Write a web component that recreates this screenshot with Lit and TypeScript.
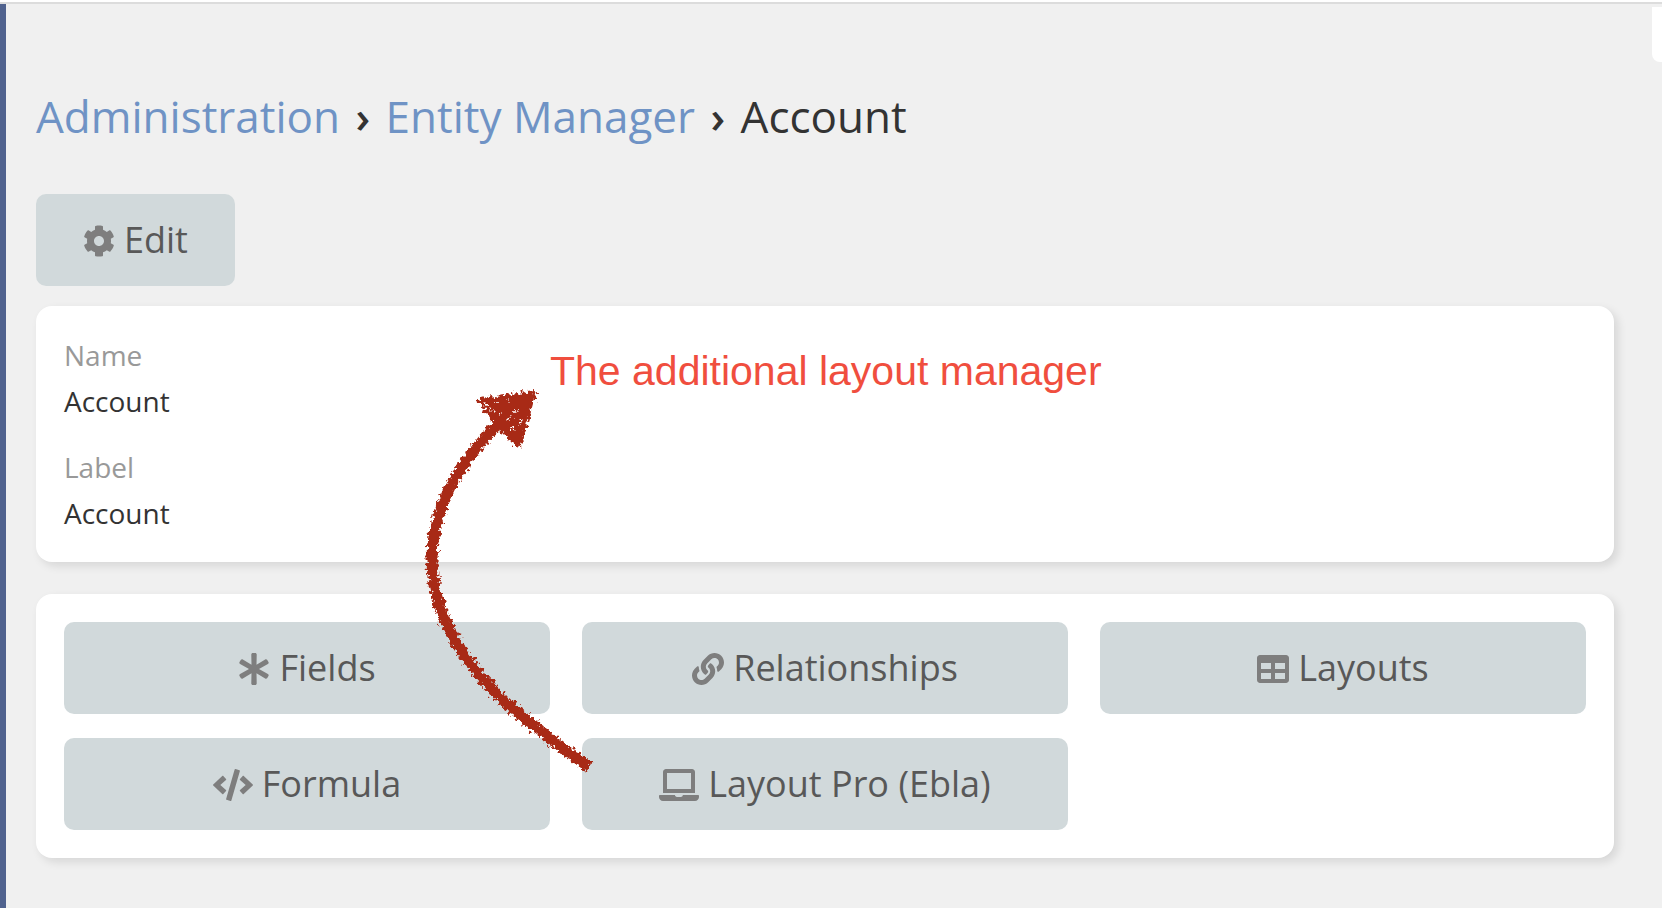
import { LitElement, html, css, svg } from "lit";
import { customElement, property } from "lit/decorators.js";

interface Glyph {
  width: number;
  path: string;
}

const GLYPHS: Record<string, Glyph> = {
  cog: {
    width: 512,
    path: "M487.4 315.7l-42.6-24.6c4.3-23.2 4.3-47 0-70.2l42.6-24.6c4.9-2.8 7.1-8.6 5.5-14-11.1-35.6-30-67.8-54.7-94.6-3.8-4.1-10-5.1-14.8-2.3L380.8 110c-17.9-15.4-38.5-27.3-60.8-35.1V25.8c0-5.6-3.9-10.5-9.4-11.7-36.7-8.2-74.3-7.8-109.2 0-5.5 1.2-9.4 6.1-9.4 11.7V75c-22.2 7.9-42.8 19.8-60.8 35.1L88.7 85.5c-4.9-2.8-11-1.9-14.8 2.3-24.7 26.7-43.6 58.9-54.7 94.6-1.7 5.4.6 11.2 5.5 14L67.3 221c-4.3 23.2-4.3 47 0 70.2l-42.6 24.6c-4.9 2.8-7.1 8.6-5.5 14 11.1 35.6 30 67.8 54.7 94.6 3.8 4.1 10 5.1 14.8 2.3l42.6-24.6c17.9 15.4 38.5 27.3 60.8 35.1v49.2c0 5.6 3.9 10.5 9.4 11.7 36.7 8.2 74.3 7.8 109.2 0 5.5-1.2 9.4-6.1 9.4-11.7v-49.2c22.2-7.9 42.8-19.8 60.8-35.1l42.6 24.6c4.9 2.8 11 1.9 14.8-2.3 24.7-26.7 43.6-58.9 54.7-94.6 1.5-5.5-.7-11.3-5.6-14.1zM256 336c-44.1 0-80-35.9-80-80s35.9-80 80-80 80 35.9 80 80-35.9 80-80 80z",
  },
  asterisk: {
    width: 512,
    path: "M478.21 334.093L336 256l142.21-78.093c11.795-6.477 15.961-21.384 9.232-33.037l-19.48-33.741c-6.728-11.653-21.72-15.499-33.227-8.523L296 186.718l3.475-162.204C299.763 11.061 288.937 0 275.48 0h-38.96c-13.456 0-24.283 11.061-23.994 24.514L216 186.718 77.265 102.607c-11.506-6.976-26.499-3.13-33.227 8.523l-19.48 33.741c-6.728 11.653-2.562 26.56 9.233 33.037L176 256 33.79 334.093c-11.795 6.477-15.961 21.384-9.232 33.037l19.48 33.741c6.728 11.653 21.721 15.499 33.227 8.523L216 325.282l-3.475 162.204C212.237 500.939 223.064 512 236.52 512h38.961c13.456 0 24.283-11.061 23.995-24.514L296 325.282l138.735 84.111c11.506 6.976 26.499 3.13 33.227-8.523l19.48-33.741c6.728-11.653 2.563-26.559-9.232-33.036z",
  },
  link: {
    width: 512,
    path: "M326.612 185.391c59.747 59.809 58.927 155.698.36 214.59-.11.12-.24.25-.36.37l-67.2 67.2c-59.27 59.27-155.699 59.262-214.96 0-59.27-59.26-59.27-155.7 0-214.96l37.106-37.106c9.84-9.84 26.786-3.3 27.294 10.606.648 17.722 3.826 35.527 9.69 52.721 1.986 5.822.567 12.262-3.783 16.612l-13.087 13.087c-28.026 28.026-28.905 73.66-1.155 101.96 28.024 28.579 74.086 28.749 102.325.51l67.2-67.19c28.191-28.191 28.073-73.757 0-101.83-3.701-3.694-7.429-6.564-10.341-8.569a16.037 16.037 0 0 1-6.947-12.606c-.396-10.567 3.348-21.456 11.698-29.806l21.054-21.055c5.521-5.521 14.182-6.199 20.584-1.731a152.482 152.482 0 0 1 20.522 17.197zM467.547 44.449c-59.261-59.262-155.69-59.27-214.96 0l-67.2 67.2c-.12.12-.25.25-.36.37-58.566 58.892-59.387 154.781.36 214.59a152.454 152.454 0 0 0 20.521 17.196c6.402 4.468 15.064 3.789 20.584-1.731l21.054-21.055c8.35-8.35 12.094-19.239 11.698-29.806a16.037 16.037 0 0 0-6.947-12.606c-2.912-2.005-6.64-4.875-10.341-8.569-28.073-28.073-28.191-73.639 0-101.83l67.2-67.19c28.239-28.239 74.3-28.069 102.325.51 27.75 28.3 26.872 73.934-1.155 101.96l-13.087 13.087c-4.35 4.35-5.769 10.79-3.783 16.612 5.864 17.194 9.042 34.999 9.69 52.721.509 13.906 17.454 20.446 27.294 10.606l37.106-37.106c59.271-59.259 59.271-155.699.001-214.959z",
  },
  table: {
    width: 512,
    path: "M464 32H48C21.49 32 0 53.49 0 80v352c0 26.51 21.49 48 48 48h416c26.51 0 48-21.49 48-48V80c0-26.51-21.49-48-48-48zM224 416H64v-96h160v96zm0-160H64v-96h160v96zm224 160H288v-96h160v96zm0-160H288v-96h160v96z",
  },
  code: {
    width: 640,
    path: "M278.9 511.5l-61-17.7c-6.4-1.8-10-8.5-8.2-14.9L346.2 8.7c1.8-6.4 8.5-10 14.9-8.2l61 17.7c6.4 1.8 10 8.5 8.2 14.9L293.8 503.3c-1.9 6.4-8.5 10.1-14.9 8.2zm-114-112.2l43.5-46.4c4.6-4.9 4.3-12.7-.8-17.2L117 256l90.6-79.7c5.1-4.5 5.5-12.3.8-17.2l-43.5-46.4c-4.5-4.8-12.1-5.1-17-.5L3.8 247.2c-5.1 4.7-5.1 12.8 0 17.5l144.1 135.1c4.9 4.6 12.5 4.4 17-.5zm327.2.6l144.1-135.1c5.1-4.7 5.1-12.8 0-17.5L492.1 112.1c-4.8-4.5-12.4-4.3-17 .5L431.6 159c-4.6 4.9-4.3 12.7.8 17.2L523 256l-90.6 79.7c-5.1 4.5-5.5 12.3-.8 17.2l43.5 46.4c4.5 4.9 12.1 5.1 17 .6z",
  },
  laptop: {
    width: 640,
    path: "M624 416H381.54c-.74 19.81-14.71 32-32.74 32H288c-18.69 0-33.02-17.47-32.77-32H16c-8.8 0-16 7.2-16 16v16c0 35.2 28.8 64 64 64h512c35.2 0 64-28.8 64-64v-16c0-8.8-7.2-16-16-16zM576 48c0-26.4-21.6-48-48-48H112C85.6 0 64 21.6 64 48v336h512V48zm-64 272H128V64h384v256z",
  },
};

@customElement("icon-button")
class IconButton extends LitElement {
  @property() icon = "cog";
  @property() label = "";

  static styles = css`
    :host {
      display: block;
    }
    .button {
      box-sizing: border-box;
      width: 100%;
      min-height: 92px;
      padding: 20px 47px;
      display: flex;
      align-items: center;
      justify-content: center;
      gap: 9px;
      border: 0;
      border-radius: 10px;
      background: #d1d9db;
      color: #585858;
      font: 400 36px/48px "Open Sans", "Noto Sans", sans-serif;
      white-space: nowrap;
      cursor: pointer;
    }
    .button:hover {
      background: #c5cfd1;
    }
    .icon {
      flex: none;
      height: 32px;
      margin-top: 2px;
      fill: #7e7e7e;
    }
  `;

  render() {
    const glyph = GLYPHS[this.icon];
    return html`<button class="button" type="button">
      <svg class="icon" viewBox="0 0 ${glyph.width} 512" aria-hidden="true">
        ${svg`<path d=${glyph.path}></path>`}
      </svg>
      <span>${this.label}</span>
    </button>`;
  }
}

@customElement("app-root")
class AppRoot extends LitElement {
  static styles = css`
    :host {
      display: flex;
      flex-direction: column;
      min-height: 100vh;
      background: #f0f0f0;
      color: #333;
      font-family: "Open Sans", "Noto Sans", sans-serif;
      overflow: hidden;
    }
    .topline {
      height: 2px;
      background: #fff;
      border-bottom: 2px solid #dcdcdc;
    }
    .body {
      position: relative;
      flex: 1;
      display: flex;
    }
    .rail {
      flex: none;
      width: 6px;
      background: #50628e;
    }
    .corner {
      position: absolute;
      top: 3px;
      right: 0;
      width: 10px;
      height: 55px;
      border-bottom-left-radius: 8px;
      background: #fff;
    }
    .content {
      flex: 1;
      min-width: 0;
      padding: 82px 48px 50px 30px;
    }
    .title {
      margin: 0 0 48px;
      font-size: 44px;
      line-height: 60px;
      font-weight: 400;
    }
    .title a {
      color: #6f93c5;
      text-decoration: none;
    }
    .sep {
      margin: 0 4px;
      font-weight: 600;
    }
    .actions {
      display: flex;
      margin-bottom: 20px;
    }
    .card {
      padding: 28px;
      border-radius: 16px;
      background: #fff;
      box-shadow: 4px 4px 10px rgba(0, 0, 0, 0.11);
    }
    .record {
      display: grid;
      gap: 24px;
      margin: 0 0 32px;
      font-size: 28px;
      line-height: 42px;
    }
    .field {
      display: grid;
      gap: 4px;
    }
    .field dt {
      color: #999;
    }
    .field dd {
      margin: 0;
    }
    .tools {
      display: grid;
      grid-template-columns: repeat(3, 1fr);
      gap: 24px 32px;
    }
    .arrow {
      position: absolute;
      left: 410px;
      top: 376px;
      width: 200px;
      height: 410px;
      pointer-events: none;
    }
    .note {
      position: absolute;
      left: 550px;
      top: 344px;
      margin: 0;
      color: #f04e3e;
      font: 400 41px/46px "Liberation Sans", Arial, sans-serif;
      white-space: nowrap;
    }
  `;

  private fields = [
    { name: "Name", value: "Account" },
    { name: "Label", value: "Account" },
  ];

  private tools = [
    { icon: "asterisk", label: "Fields" },
    { icon: "link", label: "Relationships" },
    { icon: "table", label: "Layouts" },
    { icon: "code", label: "Formula" },
    { icon: "laptop", label: "Layout Pro (Ebla)" },
  ];

  // Hand-drawn chalk arrow; the turbulence filter roughens its outline.
  private arrow() {
    return html`<svg class="arrow" viewBox="410 380 200 410" aria-hidden="true">
      <defs>
        <filter id="chalk" filterUnits="userSpaceOnUse" x="410" y="380" width="200" height="410">
          <feTurbulence type="fractalNoise" baseFrequency="0.28" numOctaves="3" seed="7" result="noise"></feTurbulence>
          <feDisplacementMap in="SourceGraphic" in2="noise" scale="10" xChannelSelector="R" yChannelSelector="G"></feDisplacementMap>
        </filter>
      </defs>
      <g filter="url(#chalk)">
        <path
          d="M589 767C563 748 529 724 501 698C466 664 432 618 432 559C432 505 463 457 502 421"
          fill="none"
          stroke="#a82b18"
          stroke-width="11"
        ></path>
        <path
          d="M480 400L534 393L519 446L503 430L494 421Z"
          fill="#a82b18"
          stroke="#a82b18"
          stroke-width="4"
          stroke-linejoin="round"
        ></path>
        <path
          d="M483 403l4 1M490 409l3 1M496 403l2 0M507 400l1 1M513 411l4 0M509 418l2-1M499 413l1 1M520 423l2-2M511 430l3-2"
          fill="none"
          stroke="#fff"
          stroke-width="1.5"
          stroke-linecap="round"
        ></path>
      </g>
    </svg>`;
  }

  render() {
    return html`
      <div class="topline"></div>
      <div class="body">
        <div class="rail"></div>
        <main class="content">
          <h1 class="title">
            <a href="#Admin">Administration</a> <span class="sep">›</span>
            <a href="#Admin/entityManager">Entity Manager</a> <span class="sep">›</span>
            Account
          </h1>
          <div class="actions">
            <icon-button icon="cog" label="Edit"></icon-button>
          </div>
          <dl class="card record">
            ${this.fields.map(
              (f) => html`<div class="field"><dt>${f.name}</dt><dd>${f.value}</dd></div>`
            )}
          </dl>
          <section class="card tools">
            ${this.tools.map(
              (t) => html`<icon-button icon=${t.icon} label=${t.label}></icon-button>`
            )}
          </section>
        </main>
        <div class="corner"></div>
        ${this.arrow()}
        <p class="note">The additional layout manager</p>
      </div>
    `;
  }
}
